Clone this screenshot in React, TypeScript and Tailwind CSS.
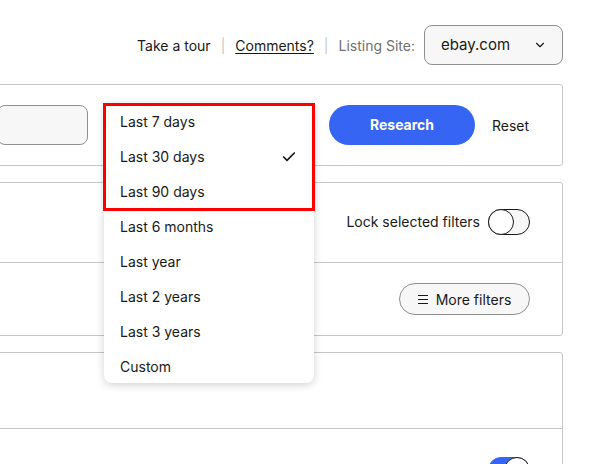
import { Check, ChevronDown } from "lucide-react";

const ranges = [
  "Last 7 days",
  "Last 30 days",
  "Last 90 days",
  "Last 6 months",
  "Last year",
  "Last 2 years",
  "Last 3 years",
  "Custom",
];

function Toggle({ on = false }: { on?: boolean }) {
  return (
    <span
      className={
        on
          ? "flex h-[26px] w-[42px] justify-end rounded-full border border-[#3665f3] bg-[#3665f3]"
          : "flex h-[26px] w-[42px] justify-start rounded-full border border-[#191919] bg-[#f7f7f7]"
      }
    >
      <span className="-m-px h-[26px] w-[26px] rounded-full border border-[#191919] bg-white" />
    </span>
  );
}

export default function App() {
  return (
    <div
      className="relative h-[464px] w-[601px] overflow-hidden bg-white text-[14px] text-[#191919]"
      style={{ fontFamily: "Inter, 'Noto Sans', sans-serif" }}
    >
      <div className="-ml-[20px] w-[583px]">
        {/* Header */}
        <div className="flex h-[84px] items-start justify-end pt-[25px]">
          <div className="flex h-[40px] items-center">
            <span>Take a tour</span>
            <span className="mx-[10px] text-[#c7c7c7]">|</span>
            <span className="underline underline-offset-2">Comments?</span>
            <span className="mx-[10px] text-[#c7c7c7]">|</span>
            <span className="text-[#707070]">Listing Site:</span>
            <button className="ml-[9px] flex h-[40px] w-[139px] items-center justify-between rounded-lg border border-[#8f8f8f] bg-[#f7f7f7] pl-[16px] pr-[15px]">
              <span className="text-[15px]">ebay.com</span>
              <ChevronDown size={14} strokeWidth={2} />
            </button>
          </div>
        </div>

        {/* Search panel */}
        <div className="flex h-[82px] items-center rounded-[3px] border border-[#c7c7c7] pl-[16px]">
          <div className="h-[40px] w-[91px] rounded-lg border border-[#8f8f8f] bg-[#f7f7f7]" />
          <div className="ml-[16px] h-[40px] w-[210px] rounded-lg border border-[#8f8f8f] bg-[#f7f7f7]" />
          <button className="ml-[15px] h-[40px] w-[146px] rounded-full bg-[#3665f3] pb-[1px] font-bold text-white">
            Research
          </button>
          <span className="ml-[17px]">Reset</span>
        </div>

        {/* Filters panel */}
        <div className="mt-[16px] rounded-[3px] border border-[#c7c7c7]">
          <div className="flex h-[80px] items-center justify-end gap-[8px] border-b border-[#c7c7c7] pb-[2px] pr-[32px]">
            <span>Lock selected filters</span>
            <Toggle />
          </div>
          <div className="flex h-[72px] items-center justify-end pr-[32px]">
            <button className="flex h-[32px] w-[131px] items-center justify-center gap-[8px] rounded-full border border-[#8f8f8f] bg-[#f7f7f7]">
              <span className="flex flex-col gap-[3px]">
                <span className="h-px w-[10px] bg-[#191919]" />
                <span className="h-px w-[10px] bg-[#191919]" />
                <span className="h-px w-[10px] bg-[#191919]" />
              </span>
              <span>More filters</span>
            </button>
          </div>
        </div>

        {/* Results panel */}
        <div className="mt-[16px] rounded-[3px] border border-[#c7c7c7]">
          <div className="h-[76px] border-b border-[#c7c7c7]" />
          <div className="flex h-[80px] items-start justify-end pr-[32px] pt-[28px]">
            <Toggle on />
          </div>
        </div>
      </div>

      {/* Date range menu */}
      <div className="absolute left-[104px] top-[103px] w-[210px] overflow-hidden rounded-lg bg-white shadow-[0_2px_8px_rgba(0,0,0,0.18)]">
        {ranges.map((r) => (
          <div key={r} className="flex h-[35px] items-center justify-between pl-[16px] pr-[17px] pt-[2px]">
            <span>{r}</span>
            {r === "Last 30 days" && <Check size={16} strokeWidth={2.5} />}
          </div>
        ))}
      </div>

      {/* Highlight box */}
      <div className="absolute left-[103px] top-[103px] h-[108px] w-[212px] border-[3px] border-[#ff0000]" />
    </div>
  );
}
